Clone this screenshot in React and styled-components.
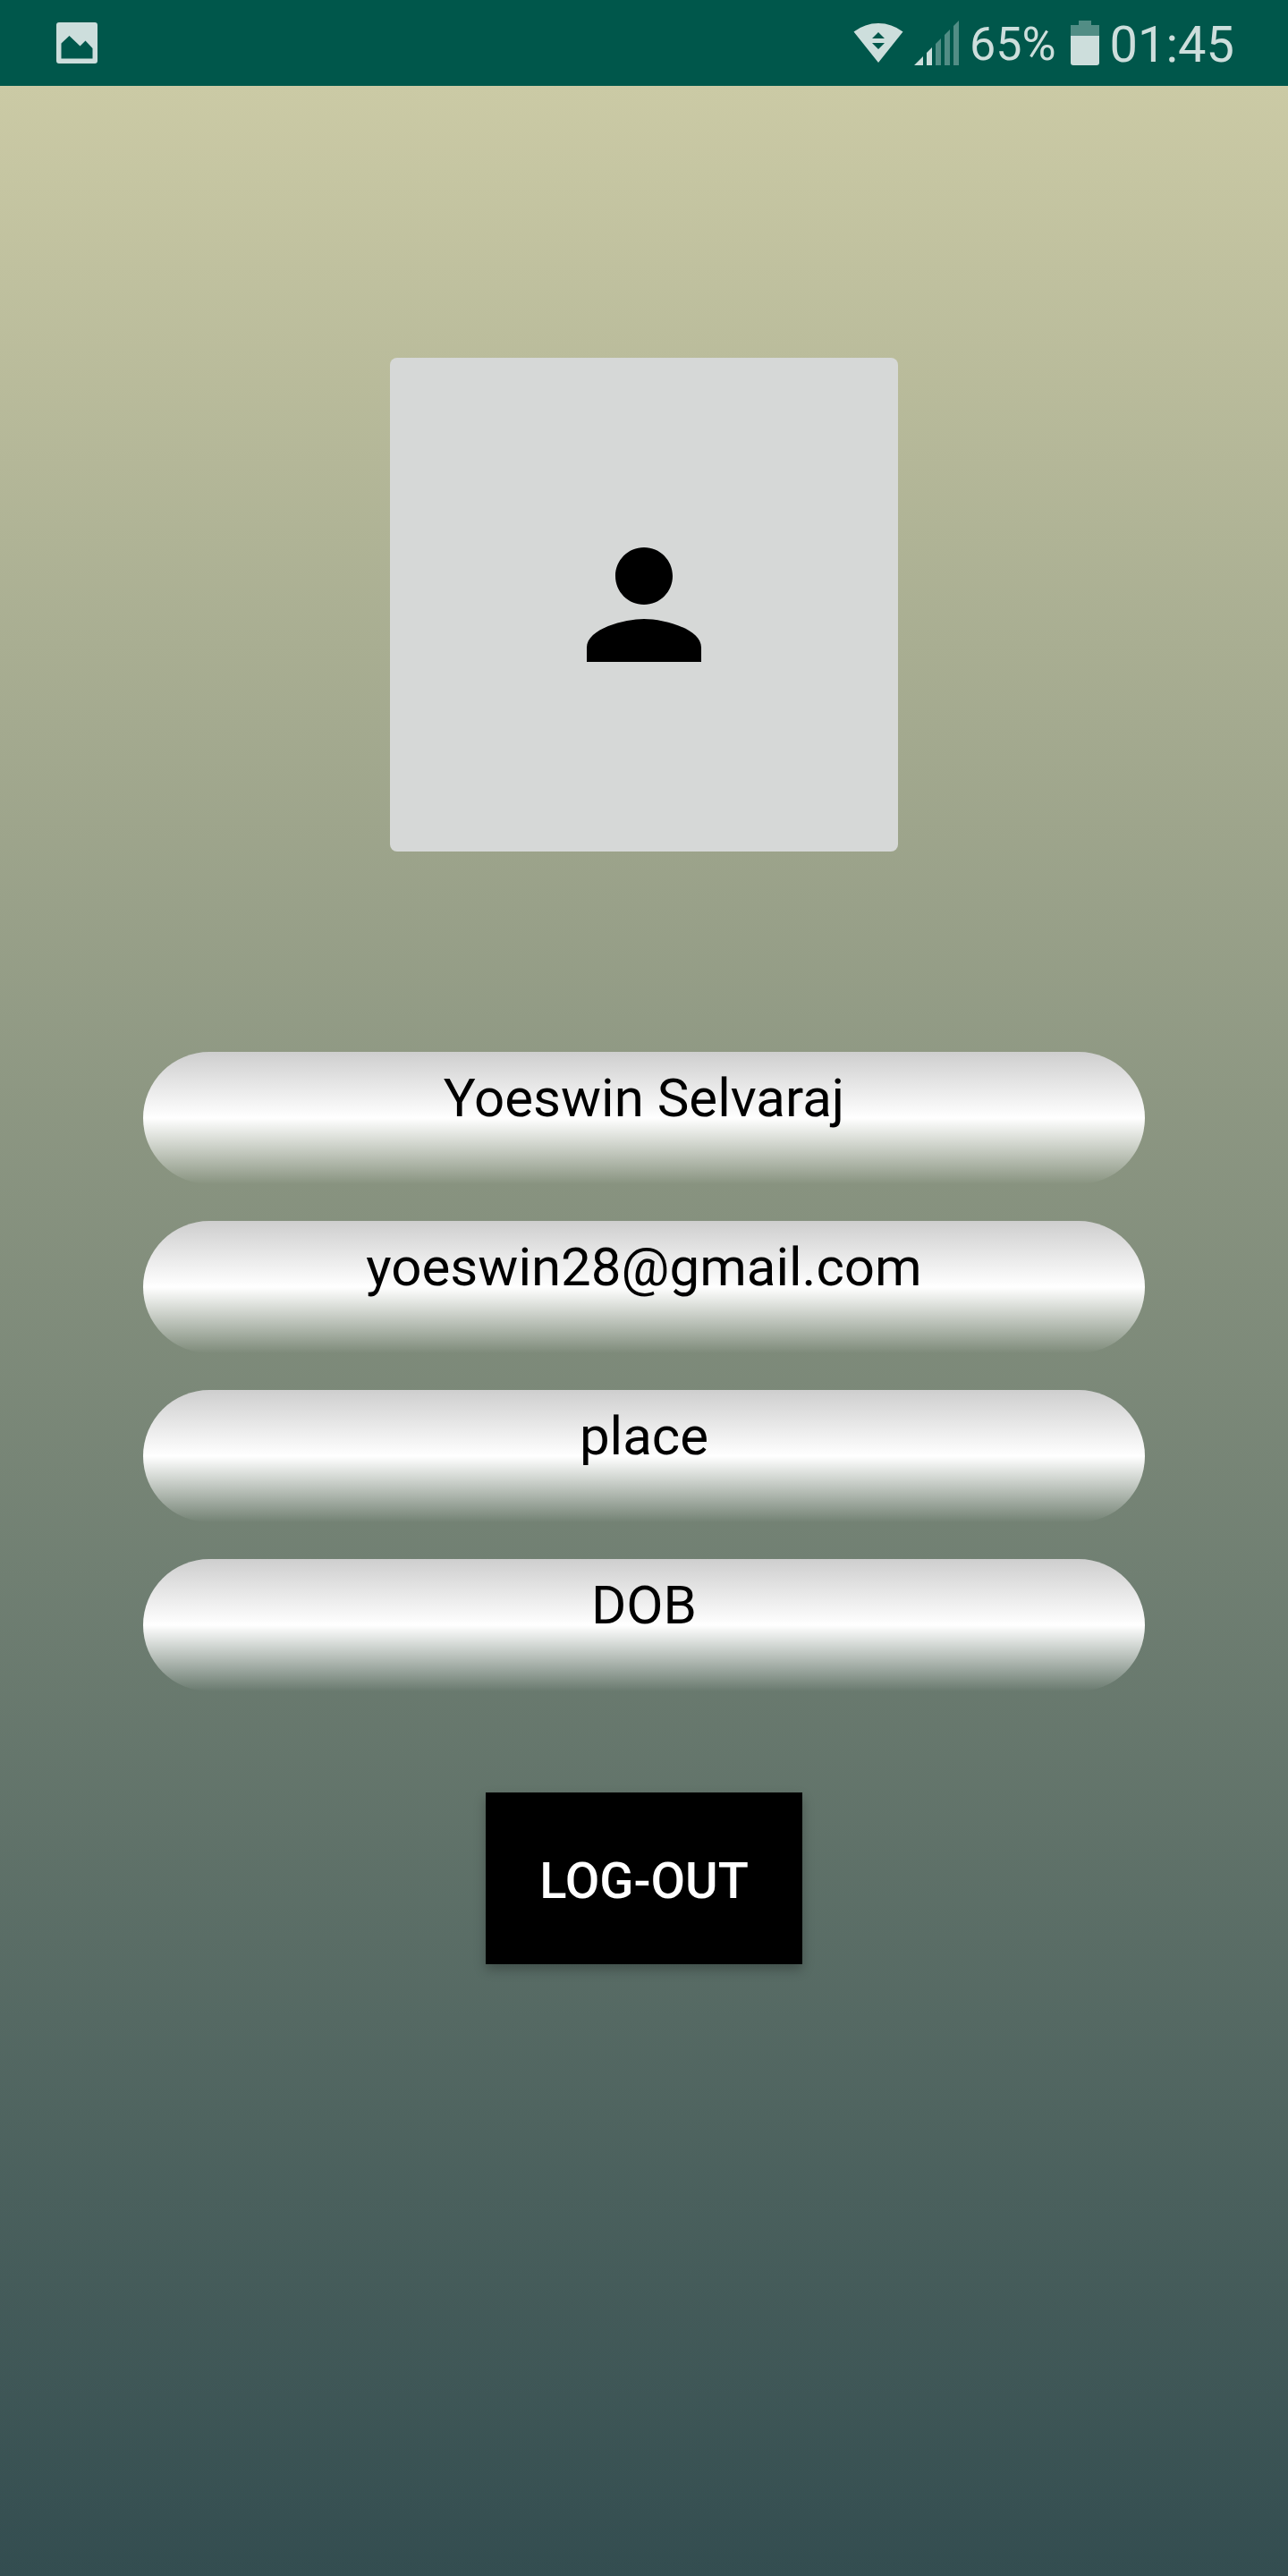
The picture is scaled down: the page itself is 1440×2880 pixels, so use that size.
import React from "react";
import styled, { createGlobalStyle } from "styled-components";

const GlobalStyle = createGlobalStyle`
  *, *::before, *::after {
    box-sizing: border-box;
  }
  body {
    margin: 0;
    font-family: Roboto, "Noto Sans", sans-serif;
  }
`;

const Screen = styled.div`
  display: flex;
  flex-direction: column;
  min-height: 100vh;
`;

const StatusBar = styled.header`
  display: flex;
  align-items: center;
  justify-content: space-between;
  height: 96px;
  padding: 0 60px;
  background: #00574b;
  color: #cddedc;
`;

const StatusGroup = styled.div`
  display: flex;
  align-items: center;
  gap: ${({ $gap }) => $gap}px;
`;

const StatusText = styled.span`
  font-size: ${({ $size }) => $size}px;
  line-height: 66px;
  padding-top: 4px;
`;

const StatusIcon = styled.svg`
  display: block;
  flex: none;
  fill: currentColor;
`;

const Profile = styled.main`
  flex: 1;
  display: flex;
  flex-direction: column;
  align-items: center;
  padding: 304px 160px 64px;
  background: linear-gradient(#cbcaa5, #334d50);
`;

const AvatarButton = styled.button`
  display: flex;
  align-items: center;
  justify-content: center;
  width: 568px;
  max-width: 100%;
  height: 552px;
  padding: 0;
  border: 0;
  border-radius: 8px;
  background: #d6d8d7;
  color: #000;
  cursor: pointer;
`;

const Details = styled.ul`
  display: flex;
  flex-direction: column;
  align-self: stretch;
  gap: 41px;
  margin: 224px 0 113px;
  padding: 0;
  list-style: none;
`;

const Detail = styled.li`
  height: 148px;
  padding-top: 17px;
  border-radius: 74px;
  background: linear-gradient(#cecece, #fff 50%, rgba(255, 255, 255, 0));
  color: #000;
  font-size: 60px;
  line-height: 70px;
  text-align: center;
`;

const LogoutButton = styled.button`
  height: 192px;
  padding: 6px 60px 0;
  border: 0;
  background: #000;
  box-shadow: 0 6px 12px rgba(0, 0, 0, 0.26);
  color: #fff;
  font-family: inherit;
  font-size: 56px;
  font-weight: 500;
  line-height: 66px;
  cursor: pointer;
`;

const PictureIcon = () => (
  <StatusIcon width="52" height="52" viewBox="60 22 52 52" aria-hidden="true">
    <path
      fillRule="evenodd"
      d="M66 25h40q3 0 3 3v40q0 3-3 3H66q-3 0-3-3V28q0-3 3-3zM68.500 48.500v17h35V54l-8-8.500-6 6-12-11.500z"
    />
  </StatusIcon>
);

const WifiIcon = () => (
  <StatusIcon width="56" height="50" viewBox="954 23 56 50" aria-hidden="true">
    <path
      fillRule="evenodd"
      d="M982 70 954.500 35.500Q967 26 982 26t27.500 9.500zM982 36l-7 7h14zM975 48l7 7 7-7z"
    />
  </StatusIcon>
);

const SignalIcon = () => (
  <StatusIcon width="50" height="50" viewBox="0 0 50 50" aria-hidden="true">
    <path d="M0 50 10 40V50zM14 36l6-6V50h-6z" />
    <path
      fillOpacity="0.4"
      d="M24 26l6-6V50h-6zM34 16l6-6V50h-6zM44 6l6-6V50h-6z"
    />
  </StatusIcon>
);

const BatteryIcon = () => (
  <StatusIcon width="32" height="50" viewBox="0 0 32 50" aria-hidden="true">
    <path fillOpacity="0.4" d="M9 0h14v5h9v12H0V5h9z" />
    <path d="M0 17h32v30q0 3-3 3H3q-3 0-3-3z" />
  </StatusIcon>
);

const PersonIcon = () => (
  <StatusIcon width="192" height="192" viewBox="0 0 24 24" aria-hidden="true">
    <path d="M12 12c2.210 0 4-1.790 4-4s-1.790-4-4-4-4 1.790-4 4 1.790 4 4 4zm0 2c-2.670 0-8 1.340-8 4v2h16v-2c0-2.660-5.330-4-8-4z" />
  </StatusIcon>
);

const details = ["Yoeswin Selvaraj", "yoeswin28@gmail.com", "place", "DOB"];

export default function App() {
  return (
    <>
      <GlobalStyle />
      <Screen>
        <StatusBar>
          <PictureIcon />
          <StatusGroup $gap={16}>
            <StatusGroup $gap={12}>
              <WifiIcon />
              <SignalIcon />
              <StatusText $size={52}>65%</StatusText>
            </StatusGroup>
            <StatusGroup $gap={12}>
              <BatteryIcon />
              <StatusText $size={56}>01:45</StatusText>
            </StatusGroup>
          </StatusGroup>
        </StatusBar>
        <Profile>
          <AvatarButton type="button" aria-label="Profile picture">
            <PersonIcon />
          </AvatarButton>
          <Details>
            {details.map((text) => (
              <Detail key={text}>{text}</Detail>
            ))}
          </Details>
          <LogoutButton type="button">LOG-OUT</LogoutButton>
        </Profile>
      </Screen>
    </>
  );
}
